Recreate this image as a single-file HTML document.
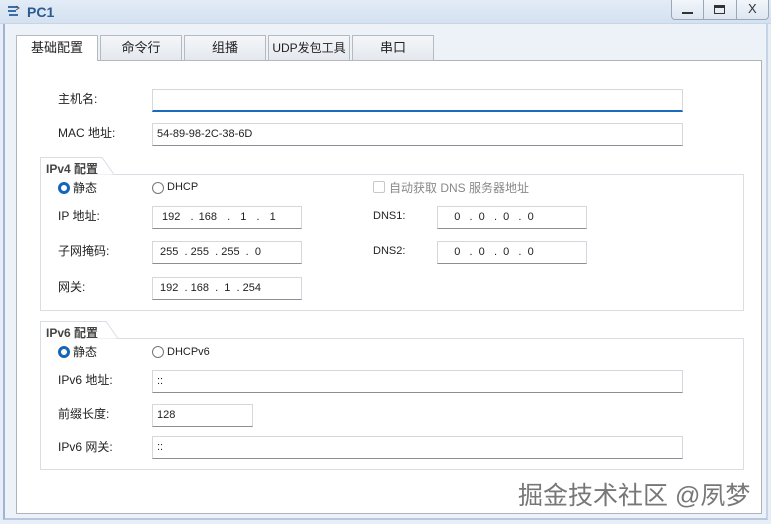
<!DOCTYPE html>
<html><head><meta charset="utf-8"><style>
*{margin:0;padding:0;box-sizing:border-box}
body{width:771px;height:524px;background:#e8eef7;font-family:"Liberation Sans","Noto Sans CJK SC",sans-serif;font-size:12px;color:#222;position:relative;overflow:hidden}
.a{position:absolute}
.title{left:0;top:0;width:771px;height:24px;background:linear-gradient(#e3ecf7,#d4e1f0);border-bottom:1px solid #c7d5e6}
.frame{left:3px;top:24px;width:765px;height:496px;border-left:2px solid #9fb4d2;border-right:2px solid #c5d3e6;border-bottom:2px solid #b8c8de;background:#edf2f9}
.tab{top:35px;height:26px;background:linear-gradient(#f4f6f9,#e4e8ee);border:1px solid #b5b9c0;text-align:center;line-height:24px;font-size:13px}
.panel{left:16px;top:60px;width:746px;height:454px;background:#fff;border:1px solid #adb3bb}
.inp{height:23px;border:1px solid #d4d8dd;border-bottom:1px solid #8a8f96;background:#fff;padding-left:4px;line-height:21px;font-size:11px}
.lbl{font-size:12px;line-height:14px}
.box{border:1px solid #d9dee4}
.rad{width:12px;height:12px;border-radius:50%;border:1px solid #777;background:#fff}
.rad.on{border:3px solid #1565b8}
</style></head><body>
<div class="a title"></div>
<svg class="a" style="left:6px;top:4px" width="16" height="16"><path d="M2 3h10M2 7h8M3 11h9" stroke="#3a6ea8" stroke-width="2"/><path d="M10 2l3 2-3 2" stroke="#555" fill="none"/></svg>
<div class="a" style="left:27px;top:4px;font-size:14px;font-weight:bold;color:#2a5a90">PC1</div>
<div class="a" style="left:671px;top:0;width:98px;height:20px;border:1px solid #9aa7b6;border-top:none;border-radius:0 0 4px 4px;background:linear-gradient(#f2f6fb,#dde6f1)"></div>
<div class="a" style="left:703px;top:0;width:1px;height:19px;background:#9aa7b6"></div>
<div class="a" style="left:736px;top:0;width:1px;height:19px;background:#9aa7b6"></div>
<div class="a" style="left:682px;top:12px;width:11px;height:2px;background:#333"></div>
<div class="a" style="left:714px;top:5px;width:11px;height:9px;border:1px solid #333;border-top:3px solid #333"></div>
<div class="a" style="left:748px;top:1px;font-size:13px;color:#333">X</div>
<div class="a frame"></div>
<div class="a panel"></div>
<div class="a tab" style="left:16px;width:82px;background:#fff;border-bottom:none;height:26px">基础配置</div>
<div class="a tab" style="left:100px;width:82px">命令行</div>
<div class="a tab" style="left:184px;width:82px">组播</div>
<div class="a tab" style="left:268px;width:82px;font-size:12px">UDP发包工具</div>
<div class="a tab" style="left:352px;width:82px">串口</div>

<div class="a lbl" style="left:58px;top:92px">主机名:</div>
<div class="a inp" style="left:152px;top:89px;width:531px;border-bottom:2px solid #1a6bbb"></div>
<div class="a lbl" style="left:58px;top:126px">MAC 地址:</div>
<div class="a inp" style="left:152px;top:123px;width:531px">54-89-98-2C-38-6D</div>

<div class="a box" style="left:40px;top:174px;width:704px;height:137px"></div>
<svg class="a" style="left:40px;top:157px" width="76" height="18"><path d="M0.5 18V0.5H62L74 17.5" fill="#fff" stroke="#d9dee4"/></svg>
<div class="a" style="left:46px;top:160px;font-size:12px;font-weight:bold;color:#444">IPv4 配置</div>
<div class="a rad on" style="left:58px;top:182px"></div><div class="a lbl" style="left:73px;top:181px">静态</div>
<div class="a rad" style="left:152px;top:182px"></div><div class="a" style="left:167px;top:181px;font-size:11px">DHCP</div>
<div class="a" style="left:373px;top:181px;width:12px;height:12px;border:1px solid #c8c8c8;border-radius:2px"></div>
<div class="a lbl" style="left:389px;top:181px;color:#888">自动获取 DNS 服务器地址</div>
<div class="a lbl" style="left:58px;top:209px">IP 地址:</div>
<div class="a inp" style="left:152px;top:206px;width:150px;word-spacing:2px">&nbsp;192 &nbsp;. 168 &nbsp;. &nbsp;1 &nbsp;. &nbsp;1</div>
<div class="a lbl" style="left:58px;top:244px">子网掩码:</div>
<div class="a inp" style="left:152px;top:241px;width:150px">&nbsp;255 &nbsp;. 255 &nbsp;. 255 &nbsp;. &nbsp;0</div>
<div class="a lbl" style="left:58px;top:280px">网关:</div>
<div class="a inp" style="left:152px;top:277px;width:150px">&nbsp;192 &nbsp;. 168 &nbsp;. &nbsp;1 &nbsp;. 254</div>
<div class="a lbl" style="left:373px;top:209px;font-size:11px">DNS1:</div>
<div class="a inp" style="left:437px;top:206px;width:150px">&nbsp;&nbsp;&nbsp;&nbsp;0 &nbsp;&nbsp;. &nbsp;0 &nbsp;&nbsp;. &nbsp;0 &nbsp;&nbsp;. &nbsp;0</div>
<div class="a lbl" style="left:373px;top:244px;font-size:11px">DNS2:</div>
<div class="a inp" style="left:437px;top:241px;width:150px">&nbsp;&nbsp;&nbsp;&nbsp;0 &nbsp;&nbsp;. &nbsp;0 &nbsp;&nbsp;. &nbsp;0 &nbsp;&nbsp;. &nbsp;0</div>

<div class="a box" style="left:40px;top:338px;width:704px;height:132px"></div>
<svg class="a" style="left:40px;top:321px" width="80" height="18"><path d="M0.5 18V0.5H66L78 17.5" fill="#fff" stroke="#d9dee4"/></svg>
<div class="a" style="left:46px;top:324px;font-size:12px;font-weight:bold;color:#444">IPv6 配置</div>
<div class="a rad on" style="left:58px;top:346px"></div><div class="a lbl" style="left:73px;top:345px">静态</div>
<div class="a rad" style="left:152px;top:346px"></div><div class="a" style="left:167px;top:346px;font-size:11px">DHCPv6</div>
<div class="a lbl" style="left:58px;top:373px">IPv6 地址:</div>
<div class="a inp" style="left:152px;top:370px;width:531px">::</div>
<div class="a lbl" style="left:58px;top:407px">前缀长度:</div>
<div class="a inp" style="left:152px;top:404px;width:101px">128</div>
<div class="a lbl" style="left:58px;top:440px">IPv6 网关:</div>
<div class="a inp" style="left:152px;top:436px;width:531px">::</div>

<div class="a" style="left:518px;top:476px;font-size:25px;color:#777;text-shadow:0 0 2px #fff,0 0 2px #fff">掘金技术社区 @夙梦</div>
</body></html>
